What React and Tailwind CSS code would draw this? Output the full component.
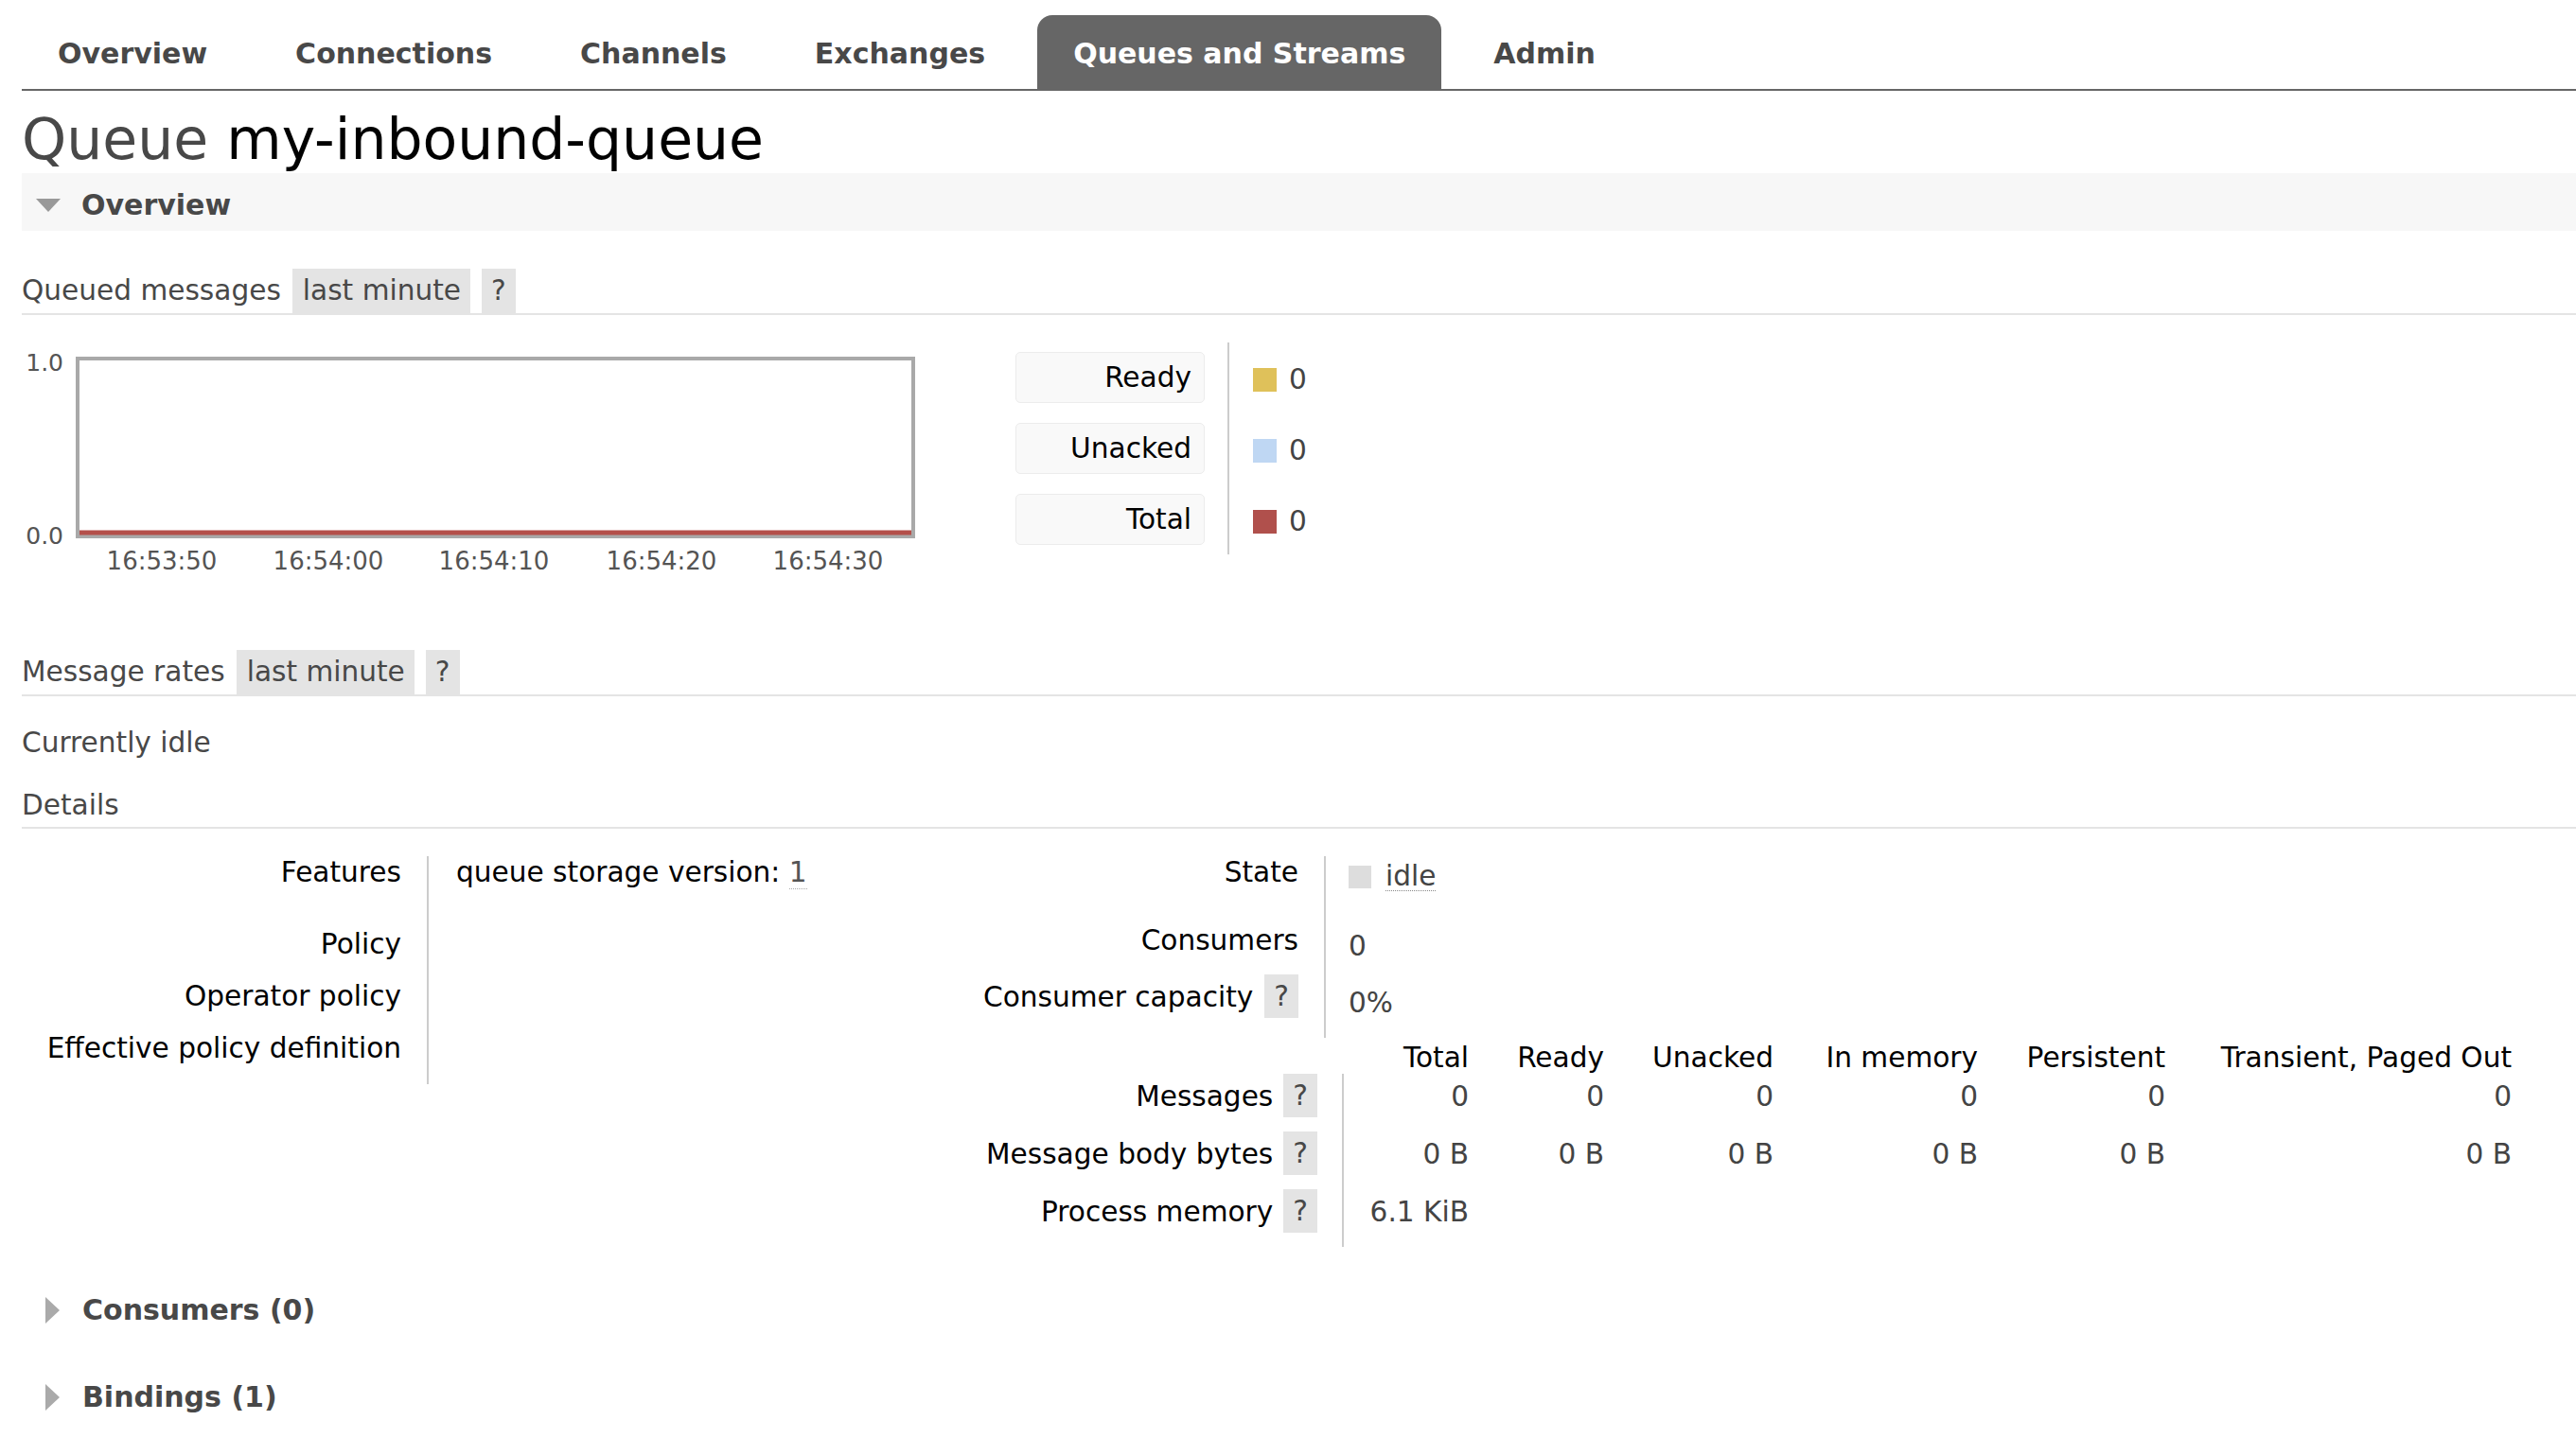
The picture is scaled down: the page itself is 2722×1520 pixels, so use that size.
import React from "react";

const tabs = ["Overview", "Connections", "Channels", "Exchanges", "Queues and Streams", "Admin"];
const active = "Queues and Streams";

const legend = [
  { label: "Ready", swatch: "bg-[#dfc15a]" },
  { label: "Unacked", swatch: "bg-[#bfd7f3]" },
  { label: "Total", swatch: "bg-[#b0504c]" },
];

const cols = [
  { label: "Total", w: "w-[158px]" },
  { label: "Ready", w: "w-[143px]" },
  { label: "Unacked", w: "w-[179px]" },
  { label: "In memory", w: "w-[216px]" },
  { label: "Persistent", w: "w-[198px]" },
  { label: "Transient, Paged Out", w: "w-[366px]" },
];

const ticks = [
  { x: 148, t: "16:53:50" },
  { x: 324, t: "16:54:00" },
  { x: 499, t: "16:54:10" },
  { x: 676, t: "16:54:20" },
  { x: 852, t: "16:54:30" },
];

const Help = ({ className = "" }) => (
  <span className={"h-[46px] bg-[#e4e4e4] px-[10px] leading-[46px] text-[#484848] " + className}>?</span>
);

const SectionHeader = ({ label }) => (
  <div className="flex items-end border-b-2 border-[#e4e4e4] text-[#484848]">
    <span className="h-[47px] leading-[47px]">{label}</span>
    <span className="ml-[12px] h-[47px] bg-[#e4e4e4] pl-[11px] pr-[10px] leading-[47px]">last minute</span>
    <span className="ml-[12px] h-[47px] bg-[#e4e4e4] px-[10px] leading-[47px]">?</span>
  </div>
);

const Collapsed = ({ label, className = "" }) => (
  <div className={"flex items-center leading-[34px] " + className}>
    <svg width="15" height="28" viewBox="0 0 15 28" className="ml-[25px] shrink-0">
      <polygon points="0,0 15,14 0,28" fill="#aaaaaa" />
    </svg>
    <span className="ml-[24px] text-[30px] font-bold text-[#484848]">{label}</span>
  </div>
);

const Chart = () => (
  <svg width="950" height="250" className="block shrink-0" fontFamily="DejaVu Sans, sans-serif">
    <rect x="59" y="19" width="883" height="188" fill="#ffffff" stroke="#a9a9a9" strokeWidth="4" />
    <line x1="61" y1="203" x2="940" y2="203" stroke="#b4504b" strokeWidth="5" />
    <text x="44" y="32" fontSize="25" fill="#545454" textAnchor="end">1.0</text>
    <text x="44" y="215" fontSize="25" fill="#545454" textAnchor="end">0.0</text>
    {ticks.map((k) => (
      <text key={k.t} x={k.x} y="242" fontSize="26" fill="#545454" textAnchor="middle">
        {k.t}
      </text>
    ))}
  </svg>
);

const LeftRow = ({ label, h, children }) => (
  <div className={"flex " + h}>
    <div className="w-[428px] shrink-0 pr-[27px] text-right text-black">{label}</div>
    <div className="flex-1 border-l-2 border-[#cccccc] pl-[29px]">{children}</div>
  </div>
);

const StateRow = ({ label, h, children }) => (
  <div className={"flex " + h}>
    <div className="flex w-[369px] shrink-0 items-start justify-end pr-[27px] text-black">{label}</div>
    <div className="flex-1 border-l-2 border-[#cccccc] pl-[24px] text-[#444444]">{children}</div>
  </div>
);

const MsgRow = ({ label, values }) => (
  <div className="flex h-[61px]">
    <div className="flex w-[388px] shrink-0 items-start justify-end pr-[26px] text-black">
      <span className="mt-[7px]">{label}</span>
      <Help className="ml-[11px]" />
    </div>
    <div className="flex border-l-2 border-[#cccccc] text-[#444444]">
      {cols.map((c, i) => (
        <div key={c.label} className={"pt-[7px] pr-[26px] text-right " + c.w}>
          {values[i] ?? ""}
        </div>
      ))}
    </div>
  </div>
);

export default function App() {
  return (
    <div className="min-h-screen bg-white pb-[20px] pl-[23px] font-['DejaVu_Sans',sans-serif] text-[29.6px] leading-[34px] text-[#484848]">
      {/* tabs */}
      <div className="flex items-end gap-[17px] border-b-2 border-[#666666] pt-[16px]">
        {tabs.map((t) => (
          <div
            key={t}
            className={
              "flex h-[78px] items-center px-[38px] pt-[4px] text-[30px] font-bold " +
              (t === active ? "rounded-t-[16px] bg-[#666666] text-white" : "text-[#484848]")
            }
          >
            {t}
          </div>
        ))}
      </div>

      <h1 className="mt-[21px] text-[60px] leading-none font-normal">
        <span className="text-[#484848]">Queue </span>
        <span className="text-black">my-inbound-queue</span>
      </h1>

      {/* overview bar */}
      <div className="mt-[6px] flex h-[61px] items-start bg-[#f7f7f7] pl-[15px] pt-[17px]">
        <div className="flex items-center">
          <svg width="26" height="14" viewBox="0 0 26 14" className="shrink-0">
            <polygon points="0,0 26,0 13,14" fill="#999999" />
          </svg>
          <span className="ml-[22px] text-[30px] font-bold text-[#484848]">Overview</span>
        </div>
      </div>

      <div className="mt-[40px]">
        <SectionHeader label="Queued messages" />
      </div>

      <div className="mt-[27px] flex items-start">
        <Chart />
        <div className="ml-[100px] mt-[2px] flex">
          <div className="flex w-[200px] flex-col gap-[21px] py-[10px]">
            {legend.map((l) => (
              <div
                key={l.label}
                className="h-[54px] rounded-[5px] border border-[#ececec] bg-[#f9f9f9] pr-[13px] text-right leading-[52px] text-black"
              >
                {l.label}
              </div>
            ))}
          </div>
          <div className="ml-[24px] flex flex-col gap-[21px] border-l-2 border-[#cccccc] py-[10px] pl-[25px]">
            {legend.map((l) => (
              <div key={l.label} className="flex h-[54px] items-center pt-[4px]">
                <span className={"h-[25px] w-[25px] " + l.swatch} />
                <span className="ml-[13px] text-[#444444]">0</span>
              </div>
            ))}
          </div>
        </div>
      </div>

      <div className="mt-[77px]">
        <SectionHeader label="Message rates" />
      </div>

      <div className="mt-[32px]">Currently idle</div>

      <div className="mt-[32px] border-b-2 border-[#e4e4e4] pb-[6px]">Details</div>

      {/* details */}
      <div className="mt-[29px] flex items-start">
        <div className="flex w-[1007px] shrink-0 flex-col">
          <LeftRow label="Features" h="h-[76px]">
            <span className="text-black">queue storage version: </span>
            <span className="border-b border-dotted border-[#aaaaaa] text-[#555555]">1</span>
          </LeftRow>
          <LeftRow label="Policy" h="h-[55px]" />
          <LeftRow label="Operator policy" h="h-[55px]" />
          <LeftRow label="Effective policy definition" h="h-[55px]" />
        </div>

        <div className="flex flex-col">
          <StateRow label="State" h="h-[72px]">
            <div className="flex items-center pt-[6px]">
              <span className="h-[24px] w-[24px] bg-[#dddddd]" />
              <span className="ml-[15px] border-b border-dotted border-[#888888] leading-[30px] text-[#444444]">idle</span>
            </div>
          </StateRow>
          <StateRow label="Consumers" h="h-[60px]">
            <div className="pt-[6px]">0</div>
          </StateRow>
          <StateRow
            label={
              <>
                <span>Consumer capacity</span>
                <Help className="-mt-[7px] ml-[12px]" />
              </>
            }
            h="h-[60px]"
          >
            <div className="pt-[6px]">0%</div>
          </StateRow>

          <div className="flex h-[38px] items-end">
            <div className="w-[388px] shrink-0" />
            <div className="flex border-l-2 border-transparent text-black">
              {cols.map((c) => (
                <div key={c.label} className={"pr-[26px] text-right " + c.w}>
                  {c.label}
                </div>
              ))}
            </div>
          </div>
          <MsgRow label="Messages" values={["0", "0", "0", "0", "0", "0"]} />
          <MsgRow label="Message body bytes" values={["0 B", "0 B", "0 B", "0 B", "0 B", "0 B"]} />
          <MsgRow label="Process memory" values={["6.1 KiB"]} />
        </div>
      </div>

      <Collapsed label="Consumers (0)" className="mt-[50px]" />
      <Collapsed label="Bindings (1)" className="mt-[58px]" />
    </div>
  );
}
